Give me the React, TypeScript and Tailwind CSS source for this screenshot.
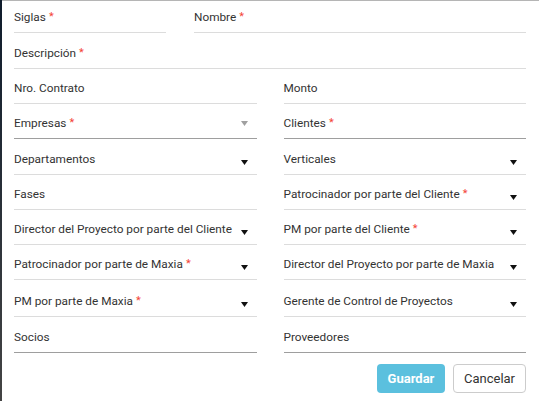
const Arrow = ({ muted }: { muted?: boolean }) => (
  <svg width="7" height="5" viewBox="0 0 7 5" className={muted ? "mb-[4px] mr-[9px]" : "mb-[1px] mr-[9px]"}>
    <path d="M0 0 L7 0 L3.5 5 Z" fill={muted ? "#a0a0a0" : "#111"} />
  </svg>
);

interface FieldProps {
  label: string;
  required?: boolean;
  arrow?: boolean | "muted";
  dark?: boolean;
  className?: string;
}

const Field: React.FC<FieldProps> = ({ label, required, arrow, dark, className }) => {
  return (
    <div
      className={`flex items-end justify-between h-[35px] pb-[8px] border-b ${
        dark ? "border-[#9e9e9e]" : "border-[#dcdcdc]"
      } ${className ?? ""}`}
    >
      <span className="text-[11.8px] leading-[14px] text-[#333]">
        {label}
        {required && <span className="text-[#f44336] ml-[3px] text-[11px] align-top">*</span>}
      </span>
      {arrow && <Arrow muted={arrow === "muted"} />}
    </div>
  );
};

export default function App() {
  return (
    <div className="w-[541px] h-[401px] bg-white flex font-['Roboto',sans-serif] overflow-hidden">
      <div className="w-[2px] h-full bg-gradient-to-b from-[#0f1c2c] to-[#444]" />
      <div className="flex-1 border-t border-[#b5b5b5] mr-[2px]">
        <div className="pl-[12px] pr-[13px] -mt-[3px]">
          <div className="grid grid-cols-[152px_1fr] gap-x-[28px]">
            <Field label="Siglas" required />
            <Field label="Nombre" required />
          </div>
          <Field label="Descripción" required className="mt-[1px]" />
          <div className="grid grid-cols-2 gap-x-[27px]">
            <Field label="Nro. Contrato" className="h-[34px]" />
            <Field label="Monto" className="h-[34px]" />
            <Field label="Empresas" required arrow="muted" dark />
            <Field label="Clientes" required dark />
            <Field label="Departamentos" arrow className="h-[36px]" />
            <Field label="Verticales" arrow className="h-[36px]" />
            <Field label="Fases" />
            <Field label="Patrocinador por parte del Cliente" required arrow />
            <Field label="Director del Proyecto por parte del Cliente" arrow className="h-[34px]" />
            <Field label="PM por parte del Cliente" required arrow className="h-[34px]" />
            <Field label="Patrocinador por parte de Maxia" required arrow />
            <Field label="Director del Proyecto por parte de Maxia" arrow />
            <Field label="PM por parte de Maxia" required arrow className="h-[37px]" />
            <Field label="Gerente de Control de Proyectos" arrow className="h-[37px]" />
            <Field label="Socios" dark className="h-[36px]" />
            <Field label="Proveedores" dark className="h-[36px]" />
          </div>
          <div className="flex justify-end gap-[8px] mt-[11px]">
            <button className="h-[29px] w-[68px] rounded-[4px] bg-[#5bc0de] text-white font-bold text-[13px]">
              Guardar
            </button>
            <button className="h-[29px] w-[73px] rounded-[4px] border border-[#cccccc] bg-white text-[#333] text-[13px]">
              Cancelar
            </button>
          </div>
        </div>
      </div>
    </div>
  );
}
